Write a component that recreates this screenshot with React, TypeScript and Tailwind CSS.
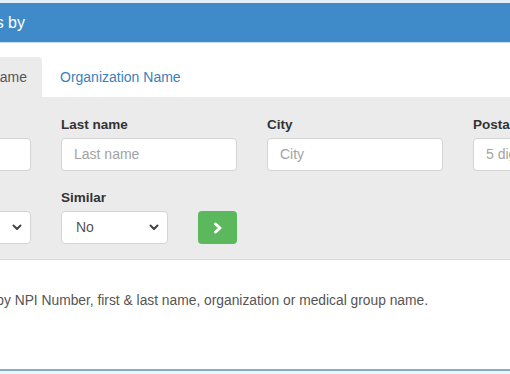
import React from 'react'

const Chevron: React.FC = () => (
  <svg width="10" height="7" viewBox="0 0 10 7" className="shrink-0">
    <path d="M1.5 1.5 L5 5 L8.5 1.5" fill="none" stroke="#444" strokeWidth="2" strokeLinecap="round" strokeLinejoin="round" />
  </svg>
)

const Field: React.FC<{ label: string; placeholder: string }> = ({ label, placeholder }) => (
  <div className="flex flex-col w-[176px] shrink-0">
    <label className="text-[13.5px] font-bold text-[#333] leading-[22px] mb-[2px] whitespace-nowrap">{label}</label>
    <div className="h-[33px] bg-white border border-[#d4d4d4] rounded-[4px] px-[12px] flex items-center text-[14px] text-[#a3a3a3] whitespace-nowrap overflow-hidden">
      {placeholder}
    </div>
  </div>
)

const Select: React.FC<{ label: string; value: string; width: string }> = ({ label, value, width }) => (
  <div className={`flex flex-col shrink-0 ${width}`}>
    <label className="text-[13.5px] font-bold text-[#333] leading-[22px] mb-[2px] whitespace-nowrap">{label}</label>
    <div className="h-[33px] bg-white border border-[#d4d4d4] rounded-[4px] pl-[14px] pr-[8px] flex items-center justify-between text-[14px] text-[#555]">
      <span>{value}</span>
      <Chevron />
    </div>
  </div>
)

const App: React.FC = () => {
  return (
    <div className="w-[510px] h-[374px] overflow-hidden bg-white" style={{ fontFamily: '"Liberation Sans", Arial, sans-serif' }}>
      <div className="ml-[-175px] w-[900px] flex flex-col">
        <div className="h-[3px] bg-[#e3eff9]" />
        <div className="h-[39px] bg-[#3f8bc9] flex items-center">
          <div className="w-[200px] text-right text-[16px] text-white whitespace-nowrap">Search Providers by</div>
        </div>
        <div className="h-[1px] bg-[#c9def0]" />
        <div className="pt-[14px] bg-white flex items-end pl-[17px]">
          <div className="w-[200px] h-[40px] pt-[1px] bg-[#ebebeb] rounded-t-[4px] flex items-center justify-end pr-[15px] text-[14px] text-[#555] whitespace-nowrap">
            Individual Name
          </div>
          <div className="ml-[3px] h-[40px] pt-[1px] px-[15px] flex items-center text-[14px] text-[#3a7fba] whitespace-nowrap">
            Organization Name
          </div>
        </div>
        <div className="bg-[#ebebeb] border-b border-[#d8d8d8] pl-[30px] pt-[17px] pb-[15px] flex flex-col gap-[16px]">
          <div className="flex gap-[30px]">
            <Field label="First name" placeholder="First name" />
            <Field label="Last name" placeholder="Last name" />
            <Field label="City" placeholder="City" />
            <Field label="Postal code" placeholder="5 digits" />
          </div>
          <div className="flex gap-[30px] items-end">
            <Select label="State" value="All" width="w-[176px]" />
            <Select label="Similar" value="No" width="w-[107px]" />
            <button className="w-[39px] h-[33px] bg-[#5cb85c] rounded-[4px] flex items-center justify-center">
              <svg width="10" height="12" viewBox="0 0 10 12">
                <path d="M2.5 2 L7 6 L2.5 10" fill="none" stroke="#fff" strokeWidth="3" strokeLinecap="round" strokeLinejoin="round" />
              </svg>
            </button>
          </div>
        </div>
        <div className="h-[109px] bg-white pt-[31px]">
          <div className="w-[603px] text-right whitespace-nowrap text-[13.8px] text-[#555] leading-[20px]">
            Search for providers by NPI Number, first &amp; last name, organization or medical group name.
          </div>
        </div>
        <div className="h-[2px] bg-[#86a9c8]" />
        <div className="h-[3px] bg-[#eef5fb]" />
      </div>
    </div>
  )
}

export default App
